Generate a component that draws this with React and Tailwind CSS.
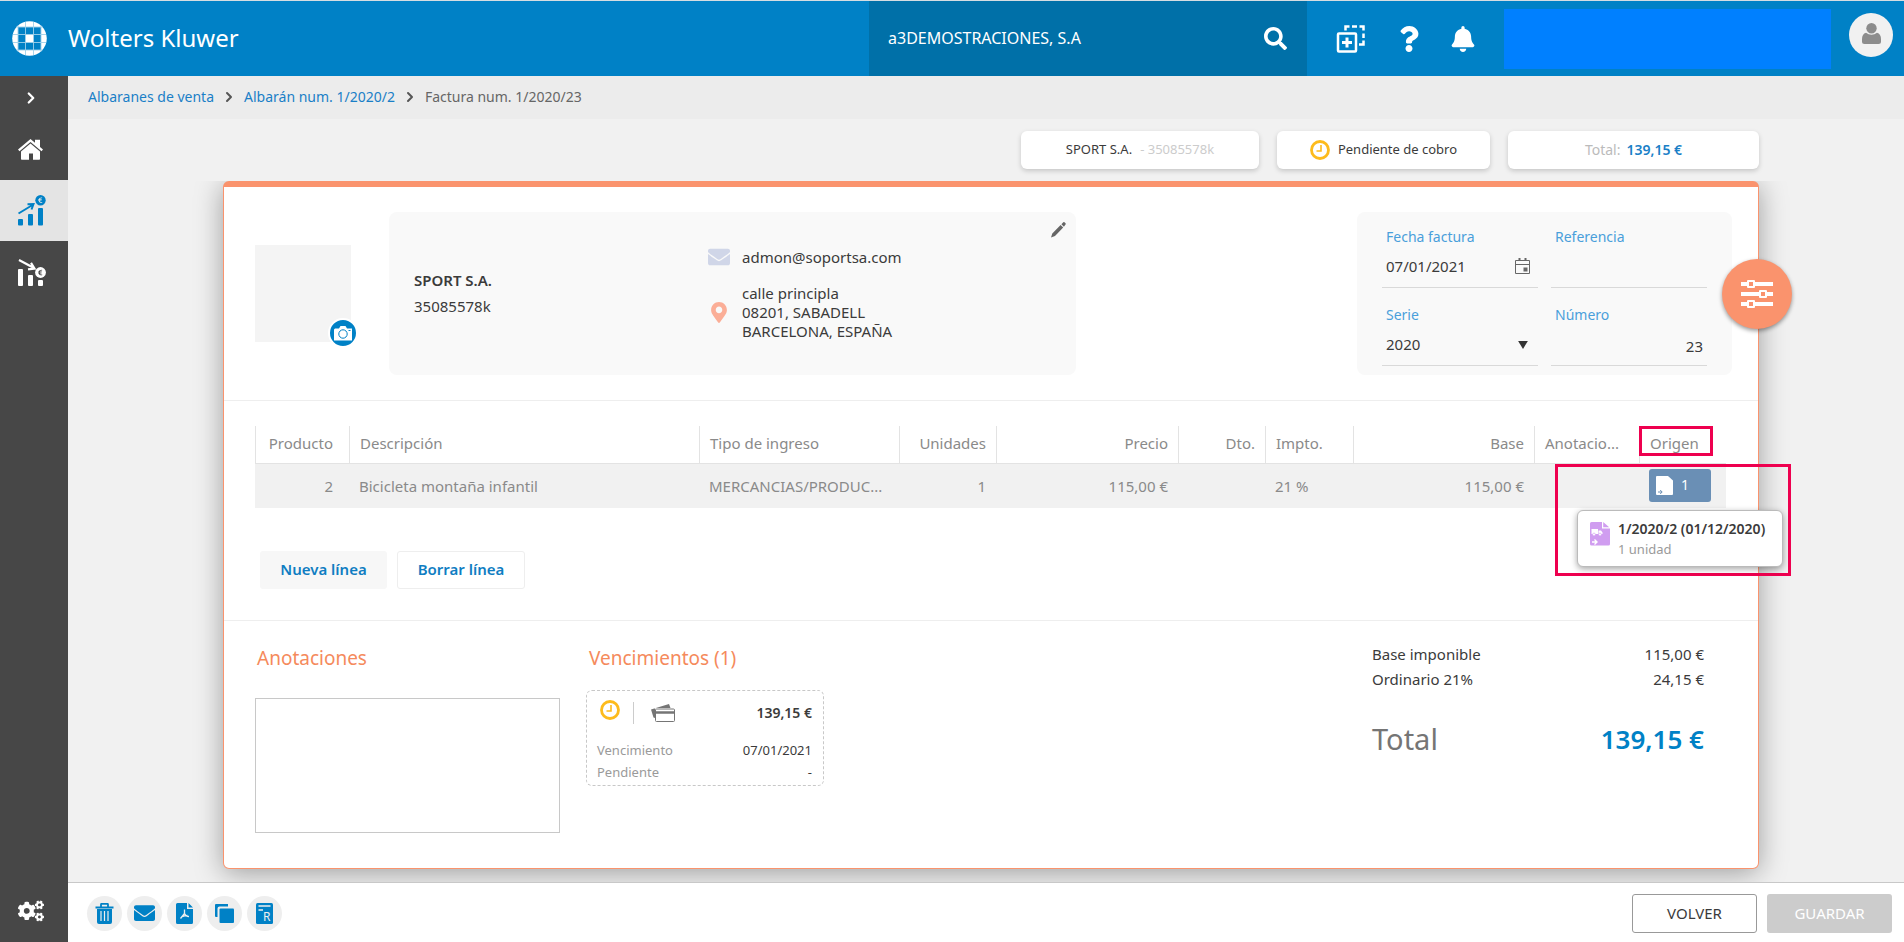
import { useState } from "react";
import { FaSearch, FaQuestion, FaBell, FaCogs, FaEnvelope, FaEuroSign, FaMapMarkerAlt } from "react-icons/fa";
import { ChevronRight } from "lucide-react";

const columns = [
  { key: "producto", label: "Producto", width: "w-[94px]", align: "text-right pr-4" },
  { key: "descripcion", label: "Descripción", width: "", align: "text-left" },
  { key: "tipo", label: "Tipo de ingreso", width: "w-[200px]", align: "text-left" },
  { key: "unidades", label: "Unidades", width: "w-[97px]", align: "text-right" },
  { key: "precio", label: "Precio", width: "w-[182px]", align: "text-right" },
  { key: "dto", label: "Dto.", width: "w-[87px]", align: "text-right" },
  { key: "impto", label: "Impto.", width: "w-[88px]", align: "text-left" },
  { key: "base", label: "Base", width: "w-[181px]", align: "text-right" },
  { key: "anotaciones", label: "Anotacio...", width: "w-[105px]", align: "text-left" },
];

const line = {
  producto: "2",
  descripcion: "Bicicleta montaña infantil",
  tipo: "MERCANCIAS/PRODUC...",
  unidades: "1",
  precio: "115,00 €",
  impto: "21 %",
  base: "115,00 €",
};

export default function App() {
  return (
    <div className="flex h-screen flex-col bg-[#f1f1f1] font-['Noto_Sans','Open_Sans',sans-serif] text-[15px] text-[#3b3b3b]">
      <Header />
      <div className="flex min-h-0 flex-1">
        <Sidebar />
        <main className="flex min-w-0 flex-1 flex-col">
          <Breadcrumb />
          <Summary />
          <div className="min-h-0 flex-1 overflow-hidden pr-[145px] pl-[155px]">
            <Invoice />
          </div>
          <Footer />
        </main>
      </div>
    </div>
  );
}

function Header() {
  return (
    <header className="flex h-[76px] shrink-0 items-stretch border-t border-[#d5dde2] bg-[#0081c6] text-white">
      <div className="flex flex-1 items-center gap-[21px] pl-3">
        <Logo />
        <span className="pb-0.5 text-2xl">Wolters Kluwer</span>
      </div>
      <div className="flex w-[438px] items-center justify-between bg-[#0070a8] pr-5 pl-[19px]">
        <span className="pb-0.5 text-base">a3DEMOSTRACIONES, S.A</span>
        <button aria-label="Buscar">
          <FaSearch className="h-[23px] w-[23px]" />
        </button>
      </div>
      <div className="flex w-[197px] items-center justify-between pr-[29px] pl-[29px]">
        <button aria-label="Añadir">
          <NewWindowIcon />
        </button>
        <button aria-label="Ayuda">
          <FaQuestion className="h-[26px] w-[26px]" />
        </button>
        <button aria-label="Avisos">
          <FaBell className="h-[26px] w-6" />
        </button>
      </div>
      <div className="mt-2 h-[60px] w-[327px] bg-[#0080ff]" />
      <div className="pt-3 pr-[11px] pl-[18px]">
        <button aria-label="Usuario" className="grid h-11 w-11 place-items-center rounded-full bg-[#f1f1f1] text-[#8c8c8c]">
          <UserIcon />
        </button>
      </div>
    </header>
  );
}

function Sidebar() {
  return (
    <nav className="flex w-[68px] shrink-0 flex-col items-center bg-[#474747] text-white">
      <button aria-label="Desplegar" className="flex h-[43px] w-full items-center justify-center pr-1.5">
        <ChevronRight className="h-[18px] w-[18px]" strokeWidth={3} />
      </button>
      <a href="#inicio" aria-label="Inicio" className="flex h-[61px] w-full items-center justify-center pr-2">
        <HomeIcon />
      </a>
      <a href="#ventas" aria-label="Ventas" className="flex h-[61px] w-full items-center justify-center bg-[#e4e4e4] pr-1 text-[#0081c6]">
        <SalesIcon />
      </a>
      <a href="#compras" aria-label="Compras" className="flex h-[64px] w-full items-center justify-center pr-1">
        <PurchasesIcon />
      </a>
      <a href="#ajustes" aria-label="Ajustes" className="mt-auto flex h-[62px] w-full items-center justify-center pr-1.5">
        <FaCogs className="h-[26px] w-[26px]" />
      </a>
    </nav>
  );
}

function Breadcrumb() {
  return (
    <div className="flex h-[43px] shrink-0 items-center gap-[7px] bg-[#ececec] pb-0.5 pl-5 text-sm">
      <a href="#albaranes" className="text-[#1a7fc7]">Albaranes de venta</a>
      <ChevronRight className="h-4 w-4 text-[#555]" strokeWidth={3} />
      <a href="#albaran" className="text-[#1a7fc7]">Albarán num. 1/2020/2</a>
      <ChevronRight className="h-4 w-4 text-[#555]" strokeWidth={3} />
      <span className="text-[#666]">Factura num. 1/2020/23</span>
    </div>
  );
}

function Summary() {
  return (
    <div className="flex h-[62px] shrink-0 justify-end gap-[18px] pt-3 pr-[145px]">
      <div className="flex h-[38px] w-[238px] items-center justify-center gap-2 rounded-md bg-white text-[13px] shadow-[0_2px_5px_rgba(0,0,0,0.18)]">
        SPORT S.A. <span className="text-[#ccc]">- 35085578k</span>
      </div>
      <div className="flex h-[38px] w-[213px] items-center justify-center gap-2 rounded-md bg-white text-[13px] shadow-[0_2px_5px_rgba(0,0,0,0.18)]">
        <ClockIcon /> Pendiente de cobro
      </div>
      <div className="flex h-[38px] w-[251px] items-center justify-center gap-1.5 rounded-md bg-white text-sm shadow-[0_2px_5px_rgba(0,0,0,0.18)]">
        <span className="text-[#bbb]">Total:</span>
        <span className="font-semibold text-[#1a7fc7]">139,15 €</span>
      </div>
    </div>
  );
}

function Invoice() {
  return (
    <div className="relative rounded-md border border-t-6 border-[#fa936d] bg-white shadow-[0_4px_28px_rgba(0,0,0,0.35)]">
      <section className="flex items-start border-b border-[#eee] py-[25px] pr-[26px] pl-[31px]">
        <div className="relative mt-[33px] h-[97px] w-24 shrink-0 bg-[#f4f4f4]">
          <button
            aria-label="Cambiar imagen"
            className="absolute -right-[7px] -bottom-[6px] grid h-[30px] w-[30px] place-items-center rounded-full border-2 border-white bg-[#0081c6]"
          >
            <CameraIcon />
          </button>
        </div>
        <Customer />
        <InvoiceData />
      </section>
      <Lines />
      <Totals />
      <button
        aria-label="Opciones"
        className="absolute top-[72px] -right-[34px] grid h-[70px] w-[70px] place-items-center rounded-full bg-[#fa936d] shadow-[0_2px_4px_rgba(0,0,0,0.4)]"
      >
        <SlidersIcon />
      </button>
    </div>
  );
}

function Customer() {
  return (
    <div className="relative ml-[38px] flex h-[163px] w-[687px] items-center rounded-lg bg-[#f9f9f9] pl-[25px]">
      <div className="w-[294px] pb-0.5">
        <p className="leading-[26px] font-semibold">SPORT S.A.</p>
        <p className="leading-[26px]">35085578k</p>
      </div>
      <div className="flex flex-col gap-4 leading-[19px]">
        <div className="flex items-center">
          <FaEnvelope className="mr-3 h-[22px] w-[22px] text-[#d0d6e8]" />
          admon@soportsa.com
        </div>
        <div className="flex items-center">
          <FaMapMarkerAlt className="mr-3 h-[21px] w-[22px] text-[#fbae97]" />
          <p>
            calle principla
            <br />
            08201, SABADELL
            <br />
            BARCELONA, ESPAÑA
          </p>
        </div>
      </div>
      <button aria-label="Editar cliente" className="absolute top-2.5 right-2.5">
        <PencilIcon />
      </button>
    </div>
  );
}

function InvoiceData() {
  const [fecha, setFecha] = useState("07/01/2021");
  const [referencia, setReferencia] = useState("");
  const [serie, setSerie] = useState("2020");
  const [numero, setNumero] = useState("23");

  return (
    <div className="ml-auto grid h-[163px] w-[375px] grid-cols-2 content-start gap-x-[13px] gap-y-[15px] rounded-lg bg-[#f9f9f9] pt-[13px] pr-[25px] pl-[25px]">
      <div className="border-b border-[#d9d9d9] pl-1">
        <label htmlFor="fecha" className="block text-sm leading-6 text-[#4a9fdb]">Fecha factura</label>
        <div className="flex h-[38px] items-center pb-1">
          <input id="fecha" className="w-full min-w-0 bg-transparent outline-none" value={fecha} onChange={(e) => setFecha(e.target.value)} />
          <button aria-label="Abrir calendario" className="mr-2">
            <CalendarIcon />
          </button>
        </div>
      </div>
      <div className="border-b border-[#d9d9d9] px-1">
        <label htmlFor="referencia" className="block text-sm leading-6 text-[#4a9fdb]">Referencia</label>
        <input id="referencia" className="h-[38px] w-full bg-transparent outline-none" value={referencia} onChange={(e) => setReferencia(e.target.value)} />
      </div>
      <div className="border-b border-[#d9d9d9] pl-1">
        <label htmlFor="serie" className="block text-sm leading-6 text-[#4a9fdb]">Serie</label>
        <div className="relative">
          <select id="serie" className="h-[38px] w-full appearance-none bg-transparent pb-1 outline-none" value={serie} onChange={(e) => setSerie(e.target.value)}>
            <option>2020</option>
            <option>2021</option>
          </select>
          <svg className="pointer-events-none absolute top-[14px] right-2.5" width="10" height="8" viewBox="0 0 11 9" fill="#333">
            <path d="M0 0h11L5.500 9z" />
          </svg>
        </div>
      </div>
      <div className="border-b border-[#d9d9d9] px-1">
        <label htmlFor="numero" className="block text-sm leading-6 text-[#4a9fdb]">Número</label>
        <input id="numero" className="h-[38px] w-full bg-transparent text-right outline-none" value={numero} onChange={(e) => setNumero(e.target.value)} />
      </div>
    </div>
  );
}

function Lines() {
  return (
    <section className="border-b border-[#eee] pt-[25px] pr-8 pb-[31px] pl-[31px]">
      <table className="w-full table-fixed border-separate border-spacing-0 text-[#8a8a8a]">
        <thead>
          <tr className="h-[38px]">
            {columns.map((c) => (
              <th key={c.key} className={`border-b border-l border-[#e3e3e3] px-2.5 pb-0.5 font-normal whitespace-nowrap ${c.width} ${c.align}`}>
                {c.label}
              </th>
            ))}
            <th className="relative w-[87px] border-b border-l border-[#e3e3e3] px-2.5 pb-0.5 text-left font-normal">
              Origen
              <span className="absolute top-0 -left-px h-[30px] w-[74px] border-3 border-[#ee004f]" />
            </th>
          </tr>
        </thead>
        <tbody>
          <tr className="h-11 bg-[#f1f1f1]">
            {columns.map((c) => (
              <td key={c.key} className={`px-2.5 whitespace-nowrap ${c.align}`}>
                {line[c.key]}
              </td>
            ))}
            <td className="relative px-2.5 pb-0.5">
              <button className="flex h-[33px] w-[62px] items-center gap-2 rounded-[3px] bg-[#6a8fb5] pl-[7px] text-sm text-white">
                <DocumentIcon />1
              </button>
              <div className="absolute top-0 -left-[84px] h-28 w-[236px] border-3 border-[#ee004f]" />
              <OriginTooltip />
            </td>
          </tr>
        </tbody>
      </table>
      <div className="mt-[43px] ml-[5px] flex gap-2.5 font-semibold text-[#0f7dc2]">
        <button className="h-[38px] w-[127px] rounded-[3px] bg-[#f7f7f7] pb-0.5">Nueva línea</button>
        <button className="h-[38px] w-[128px] rounded-[3px] border border-[#eee] bg-white pb-0.5">Borrar línea</button>
      </div>
    </section>
  );
}

function OriginTooltip() {
  return (
    <div role="tooltip" className="absolute top-[46px] -left-[62px] flex h-[57px] w-[206px] gap-2 rounded-md border border-[#bbb] bg-white pt-2 pl-3 shadow-[0_2px_6px_rgba(0,0,0,0.35)]">
      <DeliveryNoteIcon />
      <div className="whitespace-nowrap">
        <p className="text-sm leading-5 font-semibold text-[#3b3b3b]">1/2020/2 (01/12/2020)</p>
        <p className="text-[13px] leading-5 text-[#9a9a9a]">1 unidad</p>
      </div>
    </div>
  );
}

function Totals() {
  const [notes, setNotes] = useState("");

  return (
    <section className="flex items-start pt-[21px] pr-[54px] pb-[35px] pl-[31px]">
      <div className="w-[305px]">
        <label htmlFor="notas" className="ml-0.5 block text-[19px] leading-8 text-[#f58a5c]">Anotaciones</label>
        <textarea
          id="notas"
          className="mt-6 block h-[135px] w-full resize-none border border-[#c8c8c8] p-2 outline-none"
          value={notes}
          onChange={(e) => setNotes(e.target.value)}
        />
      </div>
      <div className="ml-[26px] w-[238px]">
        <h2 className="ml-[3px] text-[19px] leading-8 text-[#f58a5c]">Vencimientos (1)</h2>
        <div className="mt-4 h-[96px] rounded-md border border-dashed border-[#c8c8c8] pt-[9px] pr-[11px] pl-[10px]">
          <div className="flex h-[26px] items-center">
            <ClockIcon className="mx-[3px] mb-1.5" />
            <span className="ml-2.5 h-[22px] w-px bg-[#ccc]" />
            <CardsIcon />
            <span className="ml-auto text-sm font-semibold">139,15 €</span>
          </div>
          <dl className="mt-[13px] grid grid-cols-2 text-[13px] leading-[22px]">
            <dt className="text-[#9a9a9a]">Vencimiento</dt>
            <dd className="text-right">07/01/2021</dd>
            <dt className="text-[#9a9a9a]">Pendiente</dt>
            <dd className="text-right">-</dd>
          </dl>
        </div>
      </div>
      <dl className="ml-auto grid w-[332px] grid-cols-2 leading-[25px]">
        <dt>Base imponible</dt>
        <dd className="text-right">115,00 €</dd>
        <dt>Ordinario 21%</dt>
        <dd className="text-right">24,15 €</dd>
        <dt className="mt-[27px] text-[29px] leading-10 text-[#757575]">Total</dt>
        <dd className="mt-[27px] text-right text-[26px] leading-10 font-semibold text-[#0081c6]">139,15 €</dd>
      </dl>
    </section>
  );
}

function Footer() {
  const actions = [
    { label: "Eliminar", icon: <TrashIcon /> },
    { label: "Enviar", icon: <FaEnvelope className="h-[22px] w-[21px]" /> },
    { label: "PDF", icon: <PdfIcon /> },
    { label: "Duplicar", icon: <CopyIcon /> },
    { label: "Rectificativa", icon: <RefundIcon /> },
  ];

  return (
    <footer className="flex h-[60px] shrink-0 items-center gap-[5px] border-t border-[#c8c8c8] bg-white pt-px pr-3 pl-[19px]">
      {actions.map((a) => (
        <button key={a.label} aria-label={a.label} className="grid h-[35px] w-[35px] place-items-center rounded-full bg-[#eee] text-[#0081c6]">
          {a.icon}
        </button>
      ))}
      <button className="ml-auto h-[39px] w-[125px] rounded-[3px] border border-[#999]">VOLVER</button>
      <button className="ml-[5px] h-[39px] w-[125px] rounded-[3px] bg-[#ccc] text-white">GUARDAR</button>
    </footer>
  );
}

/* ---------- icons ---------- */

function Logo() {
  return (
    <svg width="35" height="35" viewBox="0 0 35 35">
      <circle cx="17.500" cy="17.500" r="17.300" fill="#fff" />
      <path d="M6 6h23v23H6z" fill="#0081c6" />
      <path d="M13.500 13.500h8v8h-8z" fill="#fff" />
      <path d="M6 4.500v26M13.500 1v33M21.500 1v33M29 4.500v26M4.500 6h26M1 13.500h33M1 21.500h33M4.500 29h26" stroke="#9fd0ea" strokeWidth=".9" />
    </svg>
  );
}

function UserIcon() {
  return (
    <svg className="mb-1" width="19" height="21" viewBox="0 0 19 21" fill="currentColor">
      <circle cx="9.500" cy="5.200" r="5.200" />
      <path d="M4 9.800q2.500 2 5.500 2t5.500-2q4 1 4 6.500v2.200q0 2.500-2.500 2.500h-14Q0 21 0 18.500v-2.200q0-5.500 4-6.500z" />
    </svg>
  );
}

function HomeIcon() {
  return (
    <svg width="25" height="21" viewBox="0 0 25 21" fill="currentColor">
      <path d="M12.500 0 17 3.700V.8h5V8l3 2.600-1.500 1.700L12.500 3 1.500 12.300 0 10.600z" />
      <path d="M12.500 4.500 22 12.500V20q0 .8-.8.800H15V14.500h-4v6.300H3.800Q3 20.800 3 20v-7.500z" />
    </svg>
  );
}

function NewWindowIcon() {
  return (
    <svg width="30" height="30" viewBox="0 0 30 30" fill="none" stroke="#fff" strokeWidth="2.500">
      <rect x="2" y="9.500" width="18" height="18" rx="1" />
      <path d="M11 13.500v10M6 18.500h10" strokeWidth="3" />
      <path d="M9.500 6.500V2.500h4M16 2.500h5M23.500 2.500h4v4M27.500 9.500v4.500M27.500 16.500v4h-4.500" />
    </svg>
  );
}

function SalesIcon() {
  return (
    <svg width="28" height="31" viewBox="0 0 28 31" fill="currentColor">
      <rect x="0" y="24" width="5" height="6.500" rx="1" />
      <rect x="10" y="19" width="5" height="11.500" rx="1" />
      <rect x="20" y="13" width="5" height="17.500" rx="1" />
      <path d="M.5 18.500 14.500 10M9.500 9.200l6-.2-2 5.500" fill="none" stroke="currentColor" strokeWidth="2" />
      <circle cx="22.500" cy="5.200" r="5.200" />
      <FaEuroSign x="19" y="2" size="6.500" color="#e4e4e4" />
    </svg>
  );
}

function PurchasesIcon() {
  return (
    <svg width="28" height="28" viewBox="0 0 28 28" fill="currentColor">
      <rect x="0" y="10" width="5" height="17" rx="1" />
      <rect x="10" y="16" width="5" height="11" rx="1" />
      <rect x="20" y="21" width="5" height="6" rx="1" />
      <path d="M1 1 16 9M13 3.800 16.500 9.500l-6.500.8" fill="none" stroke="currentColor" strokeWidth="2.200" />
      <circle cx="22.500" cy="13.500" r="5.400" />
      <FaEuroSign x="19" y="10.300" size="6.500" color="#474747" />
    </svg>
  );
}

function ClockIcon({ className = "" }) {
  return (
    <svg className={className} width="20" height="20" viewBox="0 0 20 20" fill="none" stroke="#fdbb1c">
      <circle cx="10" cy="10" r="8.500" strokeWidth="2.800" />
      <path d="M11 5v6H6.500" strokeWidth="1.600" />
    </svg>
  );
}

function CameraIcon() {
  return (
    <svg width="18" height="15" viewBox="0 0 18 15">
      <path d="M0 3.500 1 2.500h4L6.500 0h5L13 2.500h5V14.500H0z" fill="#fff" />
      <circle cx="9" cy="8" r="4.200" fill="none" stroke="#0081c6" />
      <path d="M14.500 4.500h2" stroke="#0081c6" />
    </svg>
  );
}

function PencilIcon() {
  return (
    <svg width="15" height="16" viewBox="0 0 15 16" fill="#666">
      <path d="M0 15.500 1.300 11.500 9.600 3 12.200 5.500 4 14zM10.400 2.200 12.300.3q.6-.5 1.200 0l1 1q.5.600 0 1.200L12.900 4.700z" />
    </svg>
  );
}

function CalendarIcon() {
  return (
    <svg width="15" height="16" viewBox="0 0 15 16" fill="none" stroke="#666">
      <path d="M.5 2.500h14v13H.5zM.5 6.500h14" />
      <path d="M4.500 0v3M10.500 0v3" strokeWidth="2" />
      <path d="M8.500 9.500h4v4h-4z" fill="#666" stroke="none" />
    </svg>
  );
}

function SlidersIcon() {
  return (
    <svg width="32" height="28" viewBox="0 0 32 28" fill="#fff">
      <path d="M0 2h32v4H0zM0 12h32v4H0zM0 22h32v4H0z" />
      <path d="M7 0h6q1 0 1 1v6q0 1-1 1H7q-1 0-1-1V1q0-1 1-1zM19 10h6q1 0 1 1v6q0 1-1 1h-6q-1 0-1-1v-6q0-1 1-1zM7 20h6q1 0 1 1v6q0 1-1 1H7q-1 0-1-1v-6q0-1 1-1z" />
      <path d="M8 2h4v4H8zM20 12h4v4h-4zM8 22h4v4H8z" fill="#fa936d" />
    </svg>
  );
}

function DocumentIcon() {
  return (
    <svg width="17" height="19" viewBox="0 0 17 19">
      <path d="M1 0h11l5 4.500V18q0 1-1 1H1q-1 0-1-1V1q0-1 1-1z" fill="#fff" />
      <path d="M2 16h4M4.200 14l2 2-2 2" fill="none" stroke="#6a8fb5" />
    </svg>
  );
}

function DeliveryNoteIcon() {
  return (
    <svg className="mt-[3px] shrink-0" width="20" height="24" viewBox="0 0 20 24">
      <path d="M1.500 0H12v6.500h8V22q0 1.500-1.500 1.500h-17Q0 23.500 0 22V1.500Q0 0 1.500 0zM13.200 0l6 5.300h-6z" fill="#d09df0" />
      <path d="M1.500 7h6.500v5H1.500zM8.500 8.500H11l1.500 2V12h-4z" fill="#fff" />
      <circle cx="4" cy="12.500" r="1.400" fill="#fff" stroke="#d09df0" strokeWidth=".6" />
      <circle cx="10" cy="12.500" r="1.400" fill="#fff" stroke="#d09df0" strokeWidth=".6" />
      <path d="M2 20h5M4.500 17.500 7 20l-2.500 2.500" fill="none" stroke="#fff" strokeWidth="1.400" />
    </svg>
  );
}

function CardsIcon() {
  return (
    <svg className="ml-[17px]" width="24" height="18" viewBox="0 0 24 18">
      <path d="M0 5.500 18 0l1.500 4H4v10L2.500 13.500z" fill="#757575" />
      <rect x="4.500" y="5" width="19" height="12.500" rx="1" fill="#fff" stroke="#757575" />
      <path d="M4.500 8.500h19" stroke="#757575" strokeWidth="2.500" />
    </svg>
  );
}

function TrashIcon() {
  return (
    <svg width="19" height="21" viewBox="0 0 19 21" fill="none">
      <path d="M6 3.500V1.500q0-.7.700-.7h5.600q.7 0 .7.700v2M.5 4.500h18" stroke="currentColor" strokeWidth="1.800" />
      <path d="M2 6h15v13q0 2-2 2H4q-2 0-2-2z" fill="currentColor" />
      <path d="M6 8v10M9.500 8v10M13 8v10" stroke="#eee" strokeWidth="1.200" />
    </svg>
  );
}

function PdfIcon() {
  return (
    <svg width="17" height="21" viewBox="0 0 17 21">
      <path d="M1.500 0H11v6h6v13.500q0 1.500-1.500 1.500h-14Q0 21 0 19.500v-18Q0 0 1.500 0zM12.500 0 17 4.500h-4.500z" fill="currentColor" />
      <path d="M8.500 6.500v4L4.500 15.500M8.500 10.500q1 3 4.500 3M5.500 14q3-1.500 6-1.500" fill="none" stroke="#eee" strokeWidth="1.300" />
    </svg>
  );
}

function CopyIcon() {
  return (
    <svg width="19" height="19" viewBox="0 0 19 19" fill="currentColor">
      <path d="M0 1q0-1 1-1h12v2.500H4.500q-2 0-2 2V13H1q-1 0-1-1z" />
      <rect x="4.500" y="4.500" width="14.500" height="14.500" rx="1" />
    </svg>
  );
}

function RefundIcon() {
  return (
    <svg width="17" height="21" viewBox="0 0 17 21">
      <rect width="17" height="21" rx="1.500" fill="currentColor" />
      <path d="M2.500 3h12M2.500 7h4.500" stroke="#eee" strokeWidth="1.500" />
      <text x="7" y="18" fontSize="12" fill="#eee">R</text>
    </svg>
  );
}
